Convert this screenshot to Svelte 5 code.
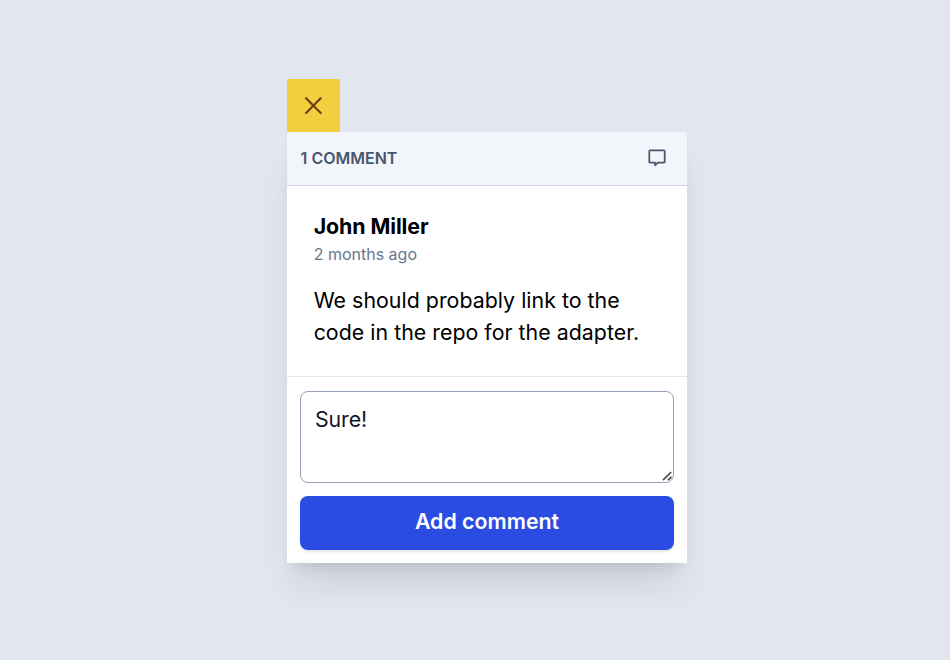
<script>
  let comment = $state('Sure!');
</script>

<main>
  <div class="thread">
    <button class="close" aria-label="Close">
      <svg width="27" height="27" viewBox="0 0 24 24" fill="none" stroke="currentColor" stroke-width="2" stroke-linecap="round" stroke-linejoin="round">
        <path d="M18.4 5.6 5.4 18.6M5.4 5.6l13 13" />
      </svg>
    </button>
    <section class="card">
      <header>
        <span>1 COMMENT</span>
        <svg width="20" height="20" viewBox="0 0 20 20" fill="none" stroke="currentColor" stroke-width="1.75" stroke-linejoin="round">
          <path d="M3 2.3h14a.7.7 0 0 1 .7.7v10.9a.7.7 0 0 1-.7.7h-6.2l-2.7 2.7v-2.7H3a.7.7 0 0 1-.7-.7V3a.7.7 0 0 1 .7-.7z" />
        </svg>
      </header>
      <article>
        <h2>John Miller</h2>
        <time>2 months ago</time>
        <p>We should probably link to the code in the repo for the adapter.</p>
      </article>
      <form onsubmit={(e) => e.preventDefault()}>
        <div class="field">
          <textarea bind:value={comment} aria-label="Comment"></textarea>
          <svg class="grip" width="11" height="11" viewBox="0 0 11 11" fill="none" stroke="#4b4b4b" stroke-width="1.7">
            <path d="M1 9.2 9.2 1M6 9.2l3.5-3.2" />
          </svg>
        </div>
        <button class="submit">Add comment</button>
      </form>
    </section>
  </div>
</main>

<style>
  :global(body) {
    margin: 0;
    background: #e2e7ef;
  }
  * {
    box-sizing: border-box;
  }
  main {
    height: 660px;
    padding: 79px 0 0 287px;
    overflow: hidden;
    background: #e2e7ef;
    font-family: Inter, sans-serif;
    font-size: 21.333px;
    color: #000;
  }
  svg {
    display: block;
  }
  .thread {
    width: 400px;
  }
  button {
    font: inherit;
    border: 0;
    padding: 0;
  }
  .close {
    display: flex;
    align-items: center;
    justify-content: center;
    width: 53px;
    height: 53px;
    background: #f2cf3f;
    color: #713f12;
  }
  .card {
    height: 431px;
    background: #fff;
    box-shadow: 0 26.7px 33.3px -6.7px rgba(0, 0, 0, 0.1), 0 10.7px 13.3px -8px rgba(0, 0, 0, 0.1);
  }
  header {
    display: flex;
    align-items: center;
    justify-content: space-between;
    height: 54px;
    padding: 0 20px 2px 13.6px;
    background: #f2f5fa;
    border-bottom: 1px solid #cbd5e1;
    color: #4a566b;
    font-size: 16px;
    font-weight: 600;
  }
  article {
    height: 191px;
    padding: 24px 26.67px 0;
    border-bottom: 1px solid #e2e8f0;
  }
  h2 {
    margin: 0;
    font-size: 21.333px;
    line-height: 32px;
    font-weight: 700;
    letter-spacing: -0.08px;
  }
  time {
    display: block;
    font-size: 16px;
    line-height: 24px;
    color: #6a7690;
  }
  p {
    margin: 18px 0 0;
    line-height: 32px;
    letter-spacing: 0.03px;
  }
  form {
    padding: 14px 13px 13px;
  }
  .field {
    position: relative;
    height: 92px;
  }
  textarea {
    display: block;
    width: 100%;
    height: 100%;
    margin: 0;
    padding: 11px 14px;
    border: 1px solid #94a3b8;
    border-radius: 8px;
    background: #fff;
    color: #0f172a;
    font: inherit;
    line-height: 32px;
    letter-spacing: -0.1px;
    resize: none;
    outline: none;
    overflow: hidden;
  }
  .grip {
    position: absolute;
    right: 1px;
    bottom: 1px;
  }
  .submit {
    display: block;
    width: 100%;
    height: 54px;
    margin-top: 13px;
    padding-bottom: 4px;
    border-radius: 8px;
    background: #2b4ce2;
    color: #fff;
    font-weight: 600;
    box-shadow: 0 1.33px 2.67px rgba(0, 0, 0, 0.1);
  }
</style>
